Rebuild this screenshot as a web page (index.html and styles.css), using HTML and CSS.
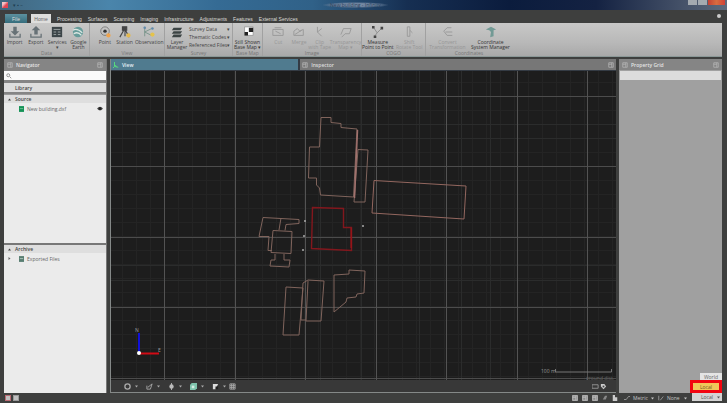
FILE: index.html
```html
<!DOCTYPE html>
<html lang="en">
<head>
<meta charset="utf-8">
<title>New building</title>
<link rel="stylesheet" href="styles.css">
</head>
<body>
<svg class="defs" aria-hidden="true">
  <symbol id="import" viewBox="0 0 14 14"><path d="M5 1h4v5h3L7 11 2 6h3z"/><path d="M1 9v4h12V9" fill="none" stroke="currentColor" stroke-width="1.5"/></symbol>
  <symbol id="export" viewBox="0 0 14 14"><path d="M5 10V5H2l5-5 5 5H9v5z"/><path d="M1 9v4h12V9" fill="none" stroke="currentColor" stroke-width="1.5"/></symbol>
  <symbol id="expand" viewBox="0 0 6 6"><path d="M0 1h6L3 5z"/></symbol>
  <symbol id="pin" viewBox="0 0 8 8"><path d="M1 1h6v6H1z M5 1v6M1 3h4" fill="none" stroke="currentColor"/></symbol>
</svg>
<div class="app">
  <header class="title"><span class="logo"></span><span class="quick">▾ ▪ –</span><span class="name">New building - Infinity</span>
    <span class="winbtns"><button aria-label="Minimize"></button><button aria-label="Maximize"></button><button class="close" aria-label="Close"></button></span>
  </header>
  <nav class="tabs">
    <button class="file">File</button><button class="home">Home</button><button>Processing</button><button>Surfaces</button><button>Scanning</button><button>Imaging</button><button>Infrastructure</button><button>Adjustments</button><button>Features</button><button>External Services</button><span class="help"></span>
  </nav>
  <section class="ribbon">
    <div class="group g1"><div class="tools">
      <button><svg class="ic steel"><use href="#import"/></svg>Import</button>
      <button><svg class="ic steel"><use href="#export"/></svg>Export</button>
      <button><svg class="ic" viewBox="0 0 14 14"><path d="M1 1h12v12H1z" fill="#3c4548"/><path d="M3 4h8M3 7h3M8 7h3M3 10h3M8 10h3" stroke="#a6adad"/></svg>Services<br>▾</button>
      <button><svg class="ic" viewBox="0 0 14 14"><circle cx="7" cy="7" r="6" fill="#679c9a"/><path d="M1 5q5-3 11 3M2 9q5-3 9 2" fill="none" stroke="#dbe6e2" stroke-width="1.5"/></svg>Google<br>Earth</button>
    </div><div class="cap">Data</div></div>
    <div class="group g2"><div class="tools">
      <button><svg class="ic" viewBox="0 0 14 14"><circle cx="7" cy="6" r="5" fill="none" stroke="#777"/><circle cx="7" cy="6" r="2" fill="#333"/><circle cx="11" cy="11" r="2.5" fill="#efa34c"/></svg>Point</button>
      <button><svg class="ic" viewBox="0 0 14 14"><path d="M4 1h5v4H4zM6 4L1 13M7 4v8M7 4l5 9" fill="#444" stroke="#444" stroke-width="1.3"/><circle cx="11" cy="11" r="2.5" fill="#e3b84f"/></svg>Station</button>
      <button class="wide"><svg class="ic" viewBox="0 0 14 14"><path d="M2 1v11M2 7l8-4M2 7l8 4" fill="none" stroke="#739187"/><circle cx="2" cy="2" r="1.5" fill="#628bac"/><circle cx="11" cy="3" r="1.5" fill="#628bac"/><circle cx="11" cy="10" r="2.5" fill="#e5c34b"/></svg>Observation</button>
    </div><div class="cap">View</div></div>
    <div class="group g3"><div class="tools">
      <button><svg class="ic" viewBox="0 0 14 14"><path d="M3 2h10l-2 3H1zM3 6h10l-2 3H1zM3 10h10l-2 3H1z" fill="#3c4444"/></svg>Layer<br>Manager</button>
      <div class="list"><button>Survey Data<i>▾</i></button><button>Thematic Codes<i>▾</i></button><button>Referenced Files<i>▾</i></button></div>
    </div><div class="cap">Survey</div></div>
    <div class="group g4"><div class="tools"><button class="strong"><svg class="ic" viewBox="0 0 14 14"><path d="M3 1h10v10H3z" fill="#fff" stroke="#999"/><path d="M8 2h5v5H8zM3 7h4v4H3z" fill="#222"/></svg>Still Shown<br>Base Map ▾</button></div><div class="cap">Base Map</div></div>
    <div class="group g5"><div class="tools faded">
      <button><svg class="ic" viewBox="0 0 14 14"><path d="M1 4h12v7H1zM3 2h8M4 6l6 3" fill="none" stroke="currentColor"/></svg>Cut</button>
      <button><svg class="ic" viewBox="0 0 14 14"><path d="M1 11V6l4-3 3 3 4-2v7zM2 10l8-5" fill="none" stroke="currentColor"/></svg>Merge</button>
      <button><svg class="ic" viewBox="0 0 14 14"><path d="M4 1v6l5 5M4 7l5-4" fill="none" stroke="currentColor"/></svg>Clip<br>with Tape</button>
      <button class="wide"><svg class="ic" viewBox="0 0 14 14"><path d="M1 10l3-7h9l-2 6H6l-4 4" fill="none" stroke="currentColor"/></svg>Transparency<br>Map ▾</button>
    </div><div class="cap">Image</div></div>
    <div class="group g6"><div class="tools">
      <button class="strong"><svg class="ic" viewBox="0 0 14 14"><path d="M2 2l4 6 5-5M3 12l3-4" fill="none" stroke="#888"/><path d="M0 0h3v3H0zM10 1h3v3h-3zM2 11h3v3H2z" fill="#444"/></svg>Measure<br>Point to Point</button>
      <button class="faded"><svg class="ic" viewBox="0 0 14 14"><path d="M5 1h3v11H5zM8 5l3 3" fill="none" stroke="currentColor"/></svg>Shift<br>Rotate Tool</button>
    </div><div class="cap">COGO</div></div>
    <div class="group g7"><div class="tools">
      <button class="faded"><svg class="ic" viewBox="0 0 14 14"><path d="M11 2H6L2 6l4 5h6M4 7h8" fill="none" stroke="currentColor"/></svg>Convert<br>Transformation</button>
      <button class="strong"><svg class="ic" viewBox="0 0 14 14"><path d="M1 4l6-3 6 3-3 1v7l-4 1 1-6-2-2z" fill="#729a95"/></svg>Coordinate<br>System Manager</button>
    </div><div class="cap">Coordinates</div></div>
  </section>
  <main>
    <aside class="nav">
      <div class="head"><svg class="sm"><use href="#pin"/></svg>Navigator<svg class="sm end"><use href="#pin"/></svg></div>
      <label class="search"><svg class="sm" viewBox="0 0 8 8"><circle cx="3" cy="3" r="2" fill="none" stroke="#777"/><path d="M5 5l2 2" stroke="#777"/></svg><input type="text" aria-label="Search"></label>
      <button class="bar lib">Library</button>
      <section class="tree"><button class="bar"><svg class="arrow" viewBox="0 0 6 6"><path d="M0 5h6L3 1z"/></svg>Source</button>
        <div class="leaf"><svg class="doc" viewBox="0 0 6 7"><path d="M0 0h6v7H0z" fill="#159257"/><path d="M1 3h4" stroke="#79c49b"/></svg>New building.dxf<svg class="eye" viewBox="0 0 8 6"><path d="M0 3q4-5 8 0q-4 5-8 0z" fill="#555"/><circle cx="4" cy="3" r="2" fill="#222"/></svg></div>
      </section>
      <section class="tree archive"><button class="bar"><svg class="arrow" viewBox="0 0 6 6"><path d="M0 5h6L3 1z"/></svg>Archive</button>
        <div class="leaf"><svg class="arrow tip" viewBox="0 0 6 6"><path d="M1 0v6l4-3z"/></svg><svg class="doc" viewBox="0 0 6 7"><path d="M0 0h6v7H0z" fill="#587e72"/><path d="M1 3h4" stroke="#b7cdc4"/></svg>Exported Files</div>
      </section>
    </aside>
    <section class="view">
      <div class="viewtabs"><button class="on"><svg class="sm" viewBox="0 0 8 8"><path d="M2 0v6l5 1M2 6l-2 2M2 4l3 2" fill="none" stroke="#57dc7c" stroke-width="1.3"/></svg>View</button><button><svg class="sm"><use href="#pin"/></svg>Inspector<svg class="sm end"><use href="#pin"/></svg></button></div>
      <svg class="canvas" viewBox="111 71 505 309" preserveAspectRatio="xMidYMid slice" role="img" aria-label="Site plan">
        <defs><pattern id="minor" x="94" y="96" width="14" height="14" patternUnits="userSpaceOnUse"><path d="M0 .5h14M.5 0v14" stroke="#242424"/></pattern></defs>
        <path d="M110 71h507v310H110z" fill="#1d1d1d"/><path d="M110 71h507v310H110z" fill="url(#minor)"/>
        <path d="M110 124.5h507M110 138.5h507M110 265.5h507M110 280.5h507M320.5 71v310M361.5 71v310M419.5 71v310M461.5 71v310M490.5 71v310" stroke="#2b2c2c"/>
        <path d="M110 96.5h507M110 166.5h507M110 237.5h507M110 307.5h507M110 378.5h507" stroke="#4c4c4c"/>
        <path d="M164.5 71v310M235.5 71v310M305.5 71v310M376.5 71v310M446.5 71v310M517.5 71v310M587.5 71v310" stroke="#535353"/>
        <g fill="none" stroke="#80645c">
          <path d="M321 117.5h10v5l10 1v4l16 1.500-3.500 68-33-2-1-7-3-3v-7h-8l1-31h10z"/>
          <path d="M358 149.500l10 .5-3 52h-11z"/>
          <path d="M374 180.500l92 5.500-2 33-92-6z" stroke="#93675f"/>
          <path d="M263 217.500l36 2v4l-13 1-1 6M263 217.500l-4 19h10l-1 14h4M281 218l-2 12M273 230.500l19 1-1 22-20-1zM275 254v6h-4l-1 6 19 1 1-7h-6v-6"/>
          <path d="M286 287l17 1-4 47h-16zM303 283l5-3 16 1-3 40h-15l2-40M303 283l-2 37h5"/>
          <path d="M334 275l15-1v-4l16 1-1 22-7 1-1 3-9 1-1 4-12 10z"/>
        </g>
        <path d="M357.500 130l-3 68" stroke="#a1716d" stroke-width="1.500"/>
        <path d="M312.500 207.500l31 1v19h8v23l-40-2z" fill="none" stroke="#82171d" stroke-width="1.400"/>
        <path d="M351 228v20" stroke="#aa1216"/>
        <g fill="#aaa"><circle cx="305" cy="221" r="1"/><circle cx="304" cy="236" r="1"/><circle cx="303" cy="250" r="1"/><circle cx="363" cy="226" r="1"/></g>
        <path d="M139 333v20" stroke="#1111d8" stroke-width="2"/><path d="M139 353.500h20" stroke="#d10b15" stroke-width="2"/><circle cx="139" cy="353" r="2" fill="#fff"/>
        <g class="axis"><text x="135" y="332">N</text><text x="158" y="352">E</text><text x="541" y="373">100 m</text></g>
        <path d="M555.500 369v3h56v-3" fill="none" stroke="#777"/><text class="axis dim" x="586" y="380">ground dist.</text>
      </svg>
      <div class="viewbar">
        <button aria-label="Settings"><svg class="tb" viewBox="0 0 8 8"><circle cx="4" cy="4" r="3" fill="none" stroke="#aaa" stroke-width="1.500"/></svg><svg class="dd"><use href="#expand"/></svg></button>
        <button aria-label="Edit"><svg class="tb" viewBox="0 0 8 8"><path d="M1 3v4h4L7 1 2 5" fill="none" stroke="#aaa"/></svg><svg class="dd"><use href="#expand"/></svg></button>
        <button aria-label="Orbit"><svg class="tb" viewBox="0 0 8 8"><circle cx="4" cy="4" r="2.500" fill="#bbb"/><path d="M4 0v8" stroke="#bbb"/></svg><svg class="dd"><use href="#expand"/></svg></button>
        <button aria-label="View cube"><svg class="tb" viewBox="0 0 8 8"><path d="M0 2l2-2h6v6L6 8H0z" fill="#7fc4ad"/><path d="M2 3h3v3H2z" fill="#d4eee4"/></svg><svg class="dd"><use href="#expand"/></svg></button>
        <button aria-label="Background"><svg class="tb" viewBox="0 0 8 8"><path d="M1 1h6L4 7H1z" fill="#ddd"/><path d="M4 4h3v3H4z" fill="#222"/></svg><svg class="dd"><use href="#expand"/></svg></button>
        <button aria-label="Grid"><svg class="tb" viewBox="0 0 8 8"><path d="M1 1h6v6H1zM3 1v6M5 1v6M1 3h6M1 5h6" fill="none" stroke="#aaa"/></svg></button>
        <span class="end pair"><svg class="tb" viewBox="0 0 8 8"><path d="M0 2h7v4H0z" fill="none" stroke="#999"/></svg><svg class="tb" viewBox="0 0 8 8"><path d="M1 1h4l2 3-3 3-3-3z" fill="#ccc"/><path d="M3 3h2v2H3z" fill="#444"/></svg></span>
      </div>
    </section>
    <aside class="props"><div class="head"><svg class="sm"><use href="#pin"/></svg>Property Grid<svg class="sm end"><use href="#pin"/></svg></div><select aria-label="Selected object"><option></option></select></aside>
  </main>
  <footer>
    <i class="chip red"></i><i class="chip"></i>
    <span class="end snaps"><svg class="st"><use href="#pin"/></svg><svg class="st"><use href="#pin"/></svg><svg class="st"><use href="#pin"/></svg><svg class="sm" viewBox="0 0 8 8"><path d="M1 6l3-5h3L5 6z" fill="#888"/></svg><svg class="sm" viewBox="0 0 8 8"><path d="M1 0h3v3h3v5H1z" fill="#ccc"/></svg></span>
    <button class="unit"><svg class="sm" viewBox="0 0 8 8"><path d="M0 6h3l3-4h2" fill="none" stroke="#aaa"/></svg>Metric<svg class="dd"><use href="#expand"/></svg></button>
    <button class="unit"><svg class="sm" viewBox="0 0 8 8"><path d="M1 1v6M3 7l4-5" fill="none" stroke="#aaa"/></svg>None<svg class="dd"><use href="#expand"/></svg></button>
    <div class="coords"><button class="current">Local<svg class="dd"><use href="#expand"/></svg></button>
      <div class="menu"><button>World</button><button class="pick">Local</button></div></div>
  </footer>
</div>
</body>
</html>
```
FILE: styles.css
```css
* { box-sizing: border-box; }
body { margin: 0; font: 5px/6px "Open Sans", sans-serif; color: #444; background: #3e3f3e; }
button, input, select { font: inherit; color: inherit; border: 0; padding: 0; margin: 0; background: none; border-radius: 0; }
svg { display: block; flex: none; fill: currentColor; }
.defs { position: absolute; width: 0; height: 0; }
.app { display: flex; flex-direction: column; height: 100vh; }
.end { margin-left: auto; }
.sm { width: 6px; height: 6px; }
.dd { width: 3px; height: 3px; }

.title { display: flex; align-items: center; height: 10px; padding: 0 2px; background: linear-gradient(90deg, #41677f, #4a85ab 15%, #356b94 30%, #306188 43%, #162f52 56%, #0b1c3d 70%, #142242 82%, #5e6a7c); }
.logo { width: 6px; height: 6px; background: linear-gradient(135deg, #f3c0c4 30%, #df4452 60%); }
.quick { margin-left: 5px; color: #1d3c50; }
.name { margin: 0 auto; padding: 0 8px; background: radial-gradient(closest-side, #7c90a8, #6c819c 60%, transparent); color: #2c425c; }
.winbtns { display: flex; gap: 1px; align-self: flex-start; }
.winbtns button { width: 9px; height: 5px; background: #a4aab0; }
.winbtns .close { width: 17px; background: linear-gradient(90deg, #c54034, #d76d40, #d24136); }

.tabs { display: flex; align-items: flex-end; gap: 6px; height: 13px; padding: 0 5px; color: #dcdcd8; font-family: "Liberation Sans", sans-serif; }
.tabs button { height: 9px; }
.tabs .file { width: 22px; background: linear-gradient(#5d919f, #356d7c); }
.tabs .home { width: 20px; margin-left: -2px; background: #dededc; color: #666; }
.help { width: 4px; height: 4px; margin: 0 1px 5px auto; border-radius: 50%; background: #ccc; }

.ribbon { display: flex; height: 34px; margin: 0 5px 0 4px; background: linear-gradient(#c8c8c7, #b8b8b8 60%, #a9a9a9); border-bottom: 1px solid #8b9897; }
.group { display: flex; flex-direction: column; justify-content: space-between; border-right: 1px solid #a1a1a1; }
.g1 { width: 86px; } .g2 { width: 75px; } .g3 { width: 68px; } .g4 { width: 30px; } .g5 { width: 99px; } .g6 { width: 64px; } .g7 { width: 86px; border: 0; }
.tools { display: flex; justify-content: center; padding-top: 3px; }
.g2 .tools, .g5 .tools { padding-left: 5px; }
.tools > button { display: flex; flex-direction: column; align-items: center; flex: 2 1 0; min-width: 0; line-height: 5px; white-space: nowrap; text-align: center; }
.tools > .wide { flex-grow: 3; }
.ic { width: 12px; height: 12px; margin-bottom: 2px; }
.steel { color: #677176; }
.faded { color: #969696; }
.tools > .strong { color: #333; }
.list { display: flex; flex-direction: column; gap: 2px; width: 43px; padding-right: 2px; }
.list button { display: flex; justify-content: space-between; line-height: 6px; white-space: nowrap; }
.list i { font-style: normal; }
.cap { text-align: center; line-height: 5px; color: #777; }

main { display: flex; flex: 1; min-height: 0; gap: 3px; margin: 2px 5px 0 4px; }
.head { display: flex; align-items: center; gap: 3px; height: 11px; padding: 0 3px; background: #858585; color: #e4e4e4; font-weight: 600; }
.head .sm, .viewtabs button:not(.on) .sm { color: #b5b5b5; }
.nav { display: flex; flex-direction: column; width: 103px; background: #858585; border-right: 1px solid #777; }
.search { display: flex; align-items: center; gap: 2px; height: 9px; margin: 1px 0; padding: 0 2px; background: #fafafa; }
.search input { flex: 1; min-width: 0; height: 7px; outline: 0; }
.bar { display: flex; align-items: center; gap: 4px; width: 100%; height: 8px; padding: 0 4px; background: #dedede; font-weight: 600; text-align: left; }
.lib { margin: 2px 0; height: 9px; padding-left: 11px; }
.tree { flex: 1; background: #ebebeb; border-top: 1px solid #999; }
.archive { border-top: 2px solid #777; }
.arrow { width: 3px; height: 3px; }
.leaf { position: relative; display: flex; align-items: center; gap: 3px; height: 11px; padding: 0 3px 0 15px; color: #666; }
.tip { position: absolute; left: 4px; }
.doc { width: 5px; height: 6px; }
.eye { width: 6px; height: 5px; margin-left: auto; }

.view { display: flex; flex-direction: column; flex: 1; min-width: 0; border: solid #858988; border-width: 0 0 1px 1px; background: #383838; }
.viewtabs { display: flex; gap: 2px; height: 12px; padding-bottom: 1px; background: #343b44; }
.viewtabs button { display: flex; align-items: center; gap: 3px; flex: 63; padding: 0 2px; background: #777; color: #ddd; font-weight: 600; }
.viewtabs .on { flex: 37; background: #507b8f; color: #e5eff5; }
.canvas { flex: 1; min-height: 0; width: 100%; }
.axis { fill: #999; font-size: 5px; }
.dim { fill: #606060; }
.viewbar { display: flex; align-items: center; gap: 8px; height: 12px; padding: 0 9px 0 13px; color: #aaa; }
.viewbar button { display: flex; align-items: center; gap: 4px; }
.viewbar button:nth-child(5) { margin-right: -5px; }
.tb { width: 7px; height: 7px; }
.pair { display: flex; gap: 1px; }
.props { width: 103px; background: #a0a0a0; }
.props select { display: block; width: calc(100% - 2px); height: 9px; margin: 1px; background: #dcdcdc; appearance: none; }

footer { display: flex; align-items: center; gap: 2px; height: 10px; padding: 0 5px; color: #c4c4c4; }
.chip { width: 6px; height: 6px; background: #c0c0c0; border: 1px solid #999; }
.red { border-color: #b86a72; }
.snaps { display: flex; gap: 4px; margin-right: 0; }
.snaps.end { margin-left: auto; margin-right: 4px; }
.st { width: 6px; height: 6px; background: #888; }
.unit { display: flex; align-items: center; gap: 3px; width: 32px; }
.unit .dd { margin-left: auto; margin-right: 3px; }
.coords { position: relative; width: 30px; align-self: stretch; }
.current { display: flex; align-items: center; justify-content: flex-end; gap: 4px; width: 100%; height: 8px; padding-right: 2px; background: #d4d4d4; color: #555; }
.menu { position: absolute; right: 0; bottom: 10px; width: 30px; display: flex; flex-direction: column; align-items: flex-end; }
.menu button { width: 22px; height: 7px; background: #e4e4e4; color: #666; }
.menu .pick { width: 32px; height: 13px; border: 3px solid #f20510; background: #f0c75a; color: #705820; }
```
